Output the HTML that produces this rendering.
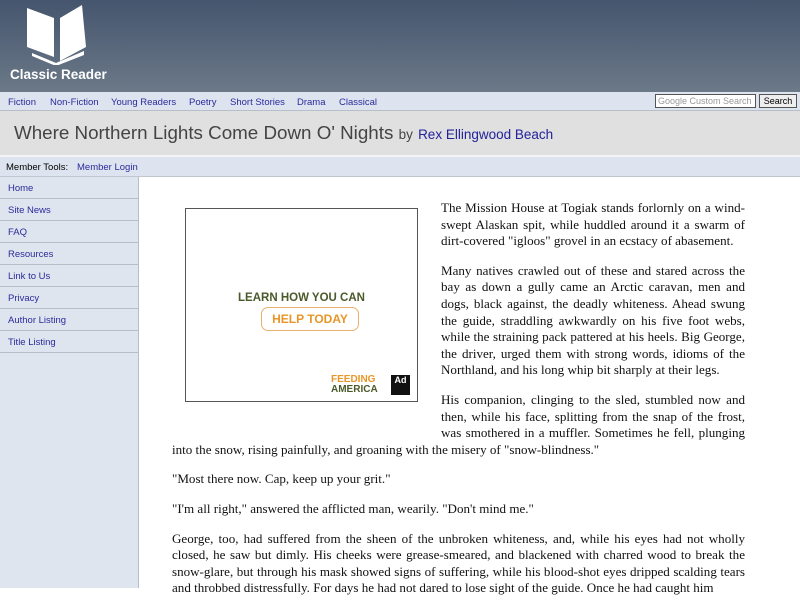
<!DOCTYPE html>
<html><head><meta charset="utf-8"><style>
*{margin:0;padding:0;box-sizing:border-box}
body{width:800px;height:588px;overflow:hidden;font-family:"Liberation Sans",sans-serif;background:#fff;position:relative}
a{color:#2a2a9a;text-decoration:none}
#hdr{position:absolute;left:0;top:0;width:800px;height:92px;background:linear-gradient(#45556d,#6b7988)}
#logo{position:absolute;left:10px;top:67px;color:#fff;font-weight:bold;font-size:13.5px}
#nav{position:absolute;top:92px;left:0;width:800px;height:19px;background:#dde4ef;border-bottom:1px solid #b8bec8;font-size:9.5px}
#nav a{position:absolute;top:5px}
#srch{position:absolute;left:655px;top:2px;width:101px;height:14px;border:1px solid #555;background:#fff;font-size:9px;color:#999;padding:1px 2px;white-space:nowrap;overflow:hidden}
#sbtn{position:absolute;left:759px;top:2px;width:38px;height:14px;border:1px solid #555;background:#eee;font-size:9px;color:#000;text-align:center;padding-top:1px}
#title{position:absolute;top:111px;left:0;width:800px;height:46px;background:#e0e0e0;border-bottom:2px solid #f4f4f4}
#mt{position:absolute;top:157px;left:0;width:800px;height:20px;background:#dde4ef;border-bottom:1px solid #c0c6d0;font-size:9.5px}
#side{position:absolute;top:177px;left:0;width:139px;height:411px;background:#dfe5ef;border-right:1px solid #b8bec8}
#side div{height:22px;border-bottom:1px solid #b8bec8;font-size:9.5px;padding:6px 0 0 8px}
#ad{position:absolute;left:185px;top:208px;width:233px;height:194px;border:1px solid #555;background:#fff}
#txt{position:absolute;left:172px;top:200px;width:573px;font-family:"Liberation Serif",serif;font-size:13.05px;line-height:16.6px;text-align:justify;color:#111}
#txt p{margin-bottom:13px}
</style></head><body>
<div id="hdr">
<svg style="position:absolute;left:26px;top:3px" width="62" height="62" viewBox="0 0 62 62"><path d="M1 5 L28 15 L28 54 L1 44 Z M34 15 L56 2 L60 44 L34 58 Z" fill="#fff"/><path d="M6 50 L30 60 L58 48 L58 52 L30 63 L6 53Z" fill="#fff"/></svg>
<div id="logo">Classic Reader</div></div>
<div id="nav"><a style="left:8px">Fiction</a><a style="left:50px">Non-Fiction</a><a style="left:111px">Young Readers</a><a style="left:189px">Poetry</a><a style="left:230px">Short Stories</a><a style="left:297px">Drama</a><a style="left:339px">Classical</a>
<div id="srch">Google Custom Search</div><div id="sbtn">Search</div></div>
<div id="title"></div>
<div style="position:absolute;left:14px;top:122px;font-size:18.8px;color:#444;white-space:nowrap">Where Northern Lights Come Down O' Nights <span style="font-size:13.5px;color:#444">by</span> <a style="font-size:13.5px;color:#22229a">Rex Ellingwood Beach</a></div>
<div id="mt"><span style="position:absolute;left:6px;top:5px">Member Tools:</span><a style="position:absolute;left:77px;top:5px">Member Login</a></div>
<div id="side"><div><a>Home</a></div><div><a>Site News</a></div><div><a>FAQ</a></div><div><a>Resources</a></div><div><a>Link to Us</a></div><div><a>Privacy</a></div><div><a>Author Listing</a></div><div><a>Title Listing</a></div></div>
<div id="ad">
<div style="position:absolute;top:83px;width:100%;text-align:center;font-size:11.5px;font-weight:bold;color:#4a5a2a">LEARN HOW YOU CAN</div>
<div style="position:absolute;left:75px;top:98px;width:98px;height:24px;border:1px solid #eab070;border-radius:7px;text-align:center;font-size:12px;font-weight:bold;color:#e8962a;padding-top:4px">HELP TODAY</div>
<div style="position:absolute;left:145px;top:166px;font-size:10px;font-weight:bold;color:#e8962a;line-height:10px">FEEDING<br><span style="color:#4a5a2a">AMERICA</span></div>
<div style="position:absolute;left:205px;top:166px;width:19px;height:20px;background:#111;color:#fff;font-size:9px;font-weight:bold;text-align:center">Ad</div>
</div>
<div id="txt">
<div style="float:left;width:269px;height:232px"></div>
<p>The Mission House at Togiak stands forlornly on a wind-swept Alaskan spit, while huddled around it a swarm of dirt-covered "igloos" grovel in an ecstacy of abasement.</p>
<p>Many natives crawled out of these and stared across the bay as down a gully came an Arctic caravan, men and dogs, black against, the deadly whiteness. Ahead swung the guide, straddling awkwardly on his five foot webs, while the straining pack pattered at his heels. Big George, the driver, urged them with strong words, idioms of the Northland, and his long whip bit sharply at their legs.</p>
<p>His companion, clinging to the sled, stumbled now and then, while his face, splitting from the snap of the frost, was smothered in a muffler. Sometimes he fell, plunging into the snow, rising painfully, and groaning with the misery of "snow-blindness."</p>
<p>"Most there now. Cap, keep up your grit."</p>
<p>"I'm all right," answered the afflicted man, wearily. "Don't mind me."</p>
<p>George, too, had suffered from the sheen of the unbroken whiteness, and, while his eyes had not wholly closed, he saw but dimly. His cheeks were grease-smeared, and blackened with charred wood to break the snow-glare, but through his mask showed signs of suffering, while his blood-shot eyes dripped scalding tears and throbbed distressfully. For days he had not dared to lose sight of the guide. Once he had caught him</p>
</div>
</body></html>
